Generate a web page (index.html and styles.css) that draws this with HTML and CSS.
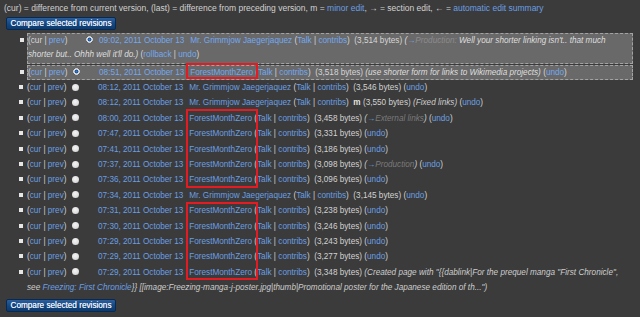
FILE: index.html
```html
<!DOCTYPE html>
<html>
<head>
<meta charset="utf-8">
<link rel="stylesheet" href="styles.css">
</head>
<body>
<p class="legend">(cur) = difference from current version, (last) = difference from preceding version, m = <a>minor edit</a>, → = section edit, ← = <a>automatic edit summary</a></p>
<button class="btn">Compare selected revisions</button>
<ul class="hist">
<li class="sel first"><span class="dl">(<span class="nl">cur</span> | <a>prev</a>)</span><span class="r hide"></span><span class="r on"></span><a class="ts">09:02, 2011 October 13</a> <a>Mr. Grimmjow Jaegerjaquez</a> (<a>Talk</a> | <a>contribs</a>)&nbsp; (3,514 bytes) <span class="sum">(<a>→</a><span class="sec">Production:</span> Well your shorter linking isn't.. that much shorter but.. Ohhh well it'll do.)</span> (<a>rollback</a> | <a>undo</a>)</li>
<li class="sel second"><span class="dl">(<a>cur</a> | <a>prev</a>)</span><span class="r on"></span><span class="r hide"></span><a class="ts">08:51, 2011 October 13</a> <a>ForestMonthZero</a> (<a>Talk</a> | <a>contribs</a>)&nbsp; (3,518 bytes) <span class="sum">(use shorter form for links to Wikimedia projects)</span> (<a>undo</a>)</li>
<li><span class="dl">(<a>cur</a> | <a>prev</a>)</span><span class="r"></span><span class="r hide"></span><a class="ts">08:12, 2011 October 13</a> <a>Mr. Grimmjow Jaegerjaquez</a> (<a>Talk</a> | <a>contribs</a>)&nbsp; (3,546 bytes) (<a>undo</a>)</li>
<li><span class="dl">(<a>cur</a> | <a>prev</a>)</span><span class="r"></span><span class="r hide"></span><a class="ts">08:12, 2011 October 13</a> <a>Mr. Grimmjow Jaegerjaquez</a> (<a>Talk</a> | <a>contribs</a>)&nbsp; <b>m</b> (3,550 bytes) <span class="sum">(Fixed links)</span> (<a>undo</a>)</li>
<li><span class="dl">(<a>cur</a> | <a>prev</a>)</span><span class="r"></span><span class="r hide"></span><a class="ts">08:00, 2011 October 13</a> <a>ForestMonthZero</a> (<a>Talk</a> | <a>contribs</a>)&nbsp; (3,458 bytes) <span class="sum">(<a>→</a><span class="sec dark">External links</span>)</span> (<a>undo</a>)</li>
<li><span class="dl">(<a>cur</a> | <a>prev</a>)</span><span class="r"></span><span class="r hide"></span><a class="ts">07:47, 2011 October 13</a> <a>ForestMonthZero</a> (<a>Talk</a> | <a>contribs</a>)&nbsp; (3,331 bytes) (<a>undo</a>)</li>
<li><span class="dl">(<a>cur</a> | <a>prev</a>)</span><span class="r"></span><span class="r hide"></span><a class="ts">07:41, 2011 October 13</a> <a>ForestMonthZero</a> (<a>Talk</a> | <a>contribs</a>)&nbsp; (3,186 bytes) (<a>undo</a>)</li>
<li><span class="dl">(<a>cur</a> | <a>prev</a>)</span><span class="r"></span><span class="r hide"></span><a class="ts">07:37, 2011 October 13</a> <a>ForestMonthZero</a> (<a>Talk</a> | <a>contribs</a>)&nbsp; (3,098 bytes) <span class="sum">(<a>→</a><span class="sec dark">Production</span>)</span> (<a>undo</a>)</li>
<li><span class="dl">(<a>cur</a> | <a>prev</a>)</span><span class="r"></span><span class="r hide"></span><a class="ts">07:36, 2011 October 13</a> <a>ForestMonthZero</a> (<a>Talk</a> | <a>contribs</a>)&nbsp; (3,096 bytes) (<a>undo</a>)</li>
<li><span class="dl">(<a>cur</a> | <a>prev</a>)</span><span class="r"></span><span class="r hide"></span><a class="ts">07:34, 2011 October 13</a> <a>Mr. Grimmjow Jaegerjaquez</a> (<a>Talk</a> | <a>contribs</a>)&nbsp; (3,145 bytes) (<a>undo</a>)</li>
<li><span class="dl">(<a>cur</a> | <a>prev</a>)</span><span class="r"></span><span class="r hide"></span><a class="ts">07:31, 2011 October 13</a> <a>ForestMonthZero</a> (<a>Talk</a> | <a>contribs</a>)&nbsp; (3,238 bytes) (<a>undo</a>)</li>
<li><span class="dl">(<a>cur</a> | <a>prev</a>)</span><span class="r"></span><span class="r hide"></span><a class="ts">07:30, 2011 October 13</a> <a>ForestMonthZero</a> (<a>Talk</a> | <a>contribs</a>)&nbsp; (3,246 bytes) (<a>undo</a>)</li>
<li><span class="dl">(<a>cur</a> | <a>prev</a>)</span><span class="r"></span><span class="r hide"></span><a class="ts">07:29, 2011 October 13</a> <a>ForestMonthZero</a> (<a>Talk</a> | <a>contribs</a>)&nbsp; (3,243 bytes) (<a>undo</a>)</li>
<li><span class="dl">(<a>cur</a> | <a>prev</a>)</span><span class="r"></span><span class="r hide"></span><a class="ts">07:29, 2011 October 13</a> <a>ForestMonthZero</a> (<a>Talk</a> | <a>contribs</a>)&nbsp; (3,277 bytes) (<a>undo</a>)</li>
<li><span class="dl">(<a>cur</a> | <a>prev</a>)</span><span class="r"></span><span class="r hide"></span><a class="ts">07:29, 2011 October 13</a> <a>ForestMonthZero</a> (<a>Talk</a> | <a>contribs</a>)&nbsp; (3,348 bytes) <span class="sum">(Created page with "{{dablink|For the prequel manga "First Chronicle", see <a>Freezing: First Chronicle</a>}} [[image:Freezing-manga-j-poster.jpg|thumb|Promotional poster for the Japanese edition of th...")</span></li>
</ul>
<button class="btn bottom">Compare selected revisions</button>
<div class="mark m1"></div>
<div class="mark m2"></div>
<div class="mark m3"></div>
</body>
</html>
```
FILE: styles.css
```css
html, body {
  height: 100%;
}
body {
  margin: 0;
  padding: 0 7px 0 4px;
  background: #3b3b3b;
  color: #d2d2d2;
  font-family: "Liberation Sans", Arial, sans-serif;
  font-size: 8.2px;
  line-height: 15.4px;
  position: relative;
  overflow: hidden;
}
a {
  color: #6a9fe2;
  text-decoration: none;
}
.legend {
  margin: 0;
  padding-top: 0.5px;
  font-size: 8.5px;
  line-height: 15px;
  white-space: nowrap;
}
.btn {
  display: block;
  margin: 1px 0 0 2px;
  width: 110px;
  height: 13px;
  padding: 0;
  font-family: "Liberation Sans", Arial, sans-serif;
  font-size: 8.2px;
  line-height: 11px;
  color: #e8eef8;
  text-shadow: 0 0 0.4px #e8eef8;
  background: linear-gradient(#2b5f9e, #14467f 55%, #0d3a6c);
  border: 1px solid #082a52;
  border-radius: 2px;
  text-align: center;
}
.btn.bottom {
  margin-top: 3px;
}
.hist {
  margin: 3px 0 0 0;
  padding: 0 0 0 23px;
  list-style: none;
}
.hist li::before {
  content: "";
  display: inline-block;
  width: 4px;
  height: 4px;
  background: #e6e6e6;
  margin-left: -8px;
  margin-right: 4px;
  vertical-align: 1px;
}
.hist li.sel {
  background: #696969;
  border: 1px dashed #a3a3a3;
  color: #d6d6d6;
}
.hist li.first {
  line-height: 14.5px;
  margin-bottom: 1px;
}
.hist li.second {
  line-height: 13.5px;
}
.sel a {
  color: #73a8ee;
}
.dl {
  display: inline-block;
  width: 45px;
}
.nl {
  color: #d6d6d6;
}
.r {
  display: inline-block;
  width: 7px;
  height: 7px;
  border-radius: 50%;
  margin-right: 6px;
  vertical-align: -0.5px;
  background: radial-gradient(circle at 45% 40%, #f4f4f4 0, #e2e2e2 50%, #c4c4c4 100%);
}
.r.on {
  background: radial-gradient(circle, #3b7fd0 0, #1a4f92 1.6px, #e8e8e8 2.3px, #cfcfcf 3.2px, #5a5a5a 3.5px);
}
.r.hide {
  visibility: hidden;
}
.ts {
  margin-right: 3.5px;
}
.sum {
  font-style: italic;
  color: #cdcdcd;
}
.sel .sum {
  color: #dedede;
}
.sec {
  color: #8c8c8c;
}
.sec.dark {
  color: #7a7a7a;
}
b {
  font-weight: bold;
  color: #e4e4e4;
}
.mark {
  position: absolute;
  left: 186px;
  width: 72px;
  border: 2px solid #e31b23;
  box-sizing: border-box;
}
.m1 {
  top: 63px;
  height: 16px;
}
.m2 {
  top: 109px;
  height: 79px;
}
.m3 {
  top: 202px;
  height: 78px;
}
```
